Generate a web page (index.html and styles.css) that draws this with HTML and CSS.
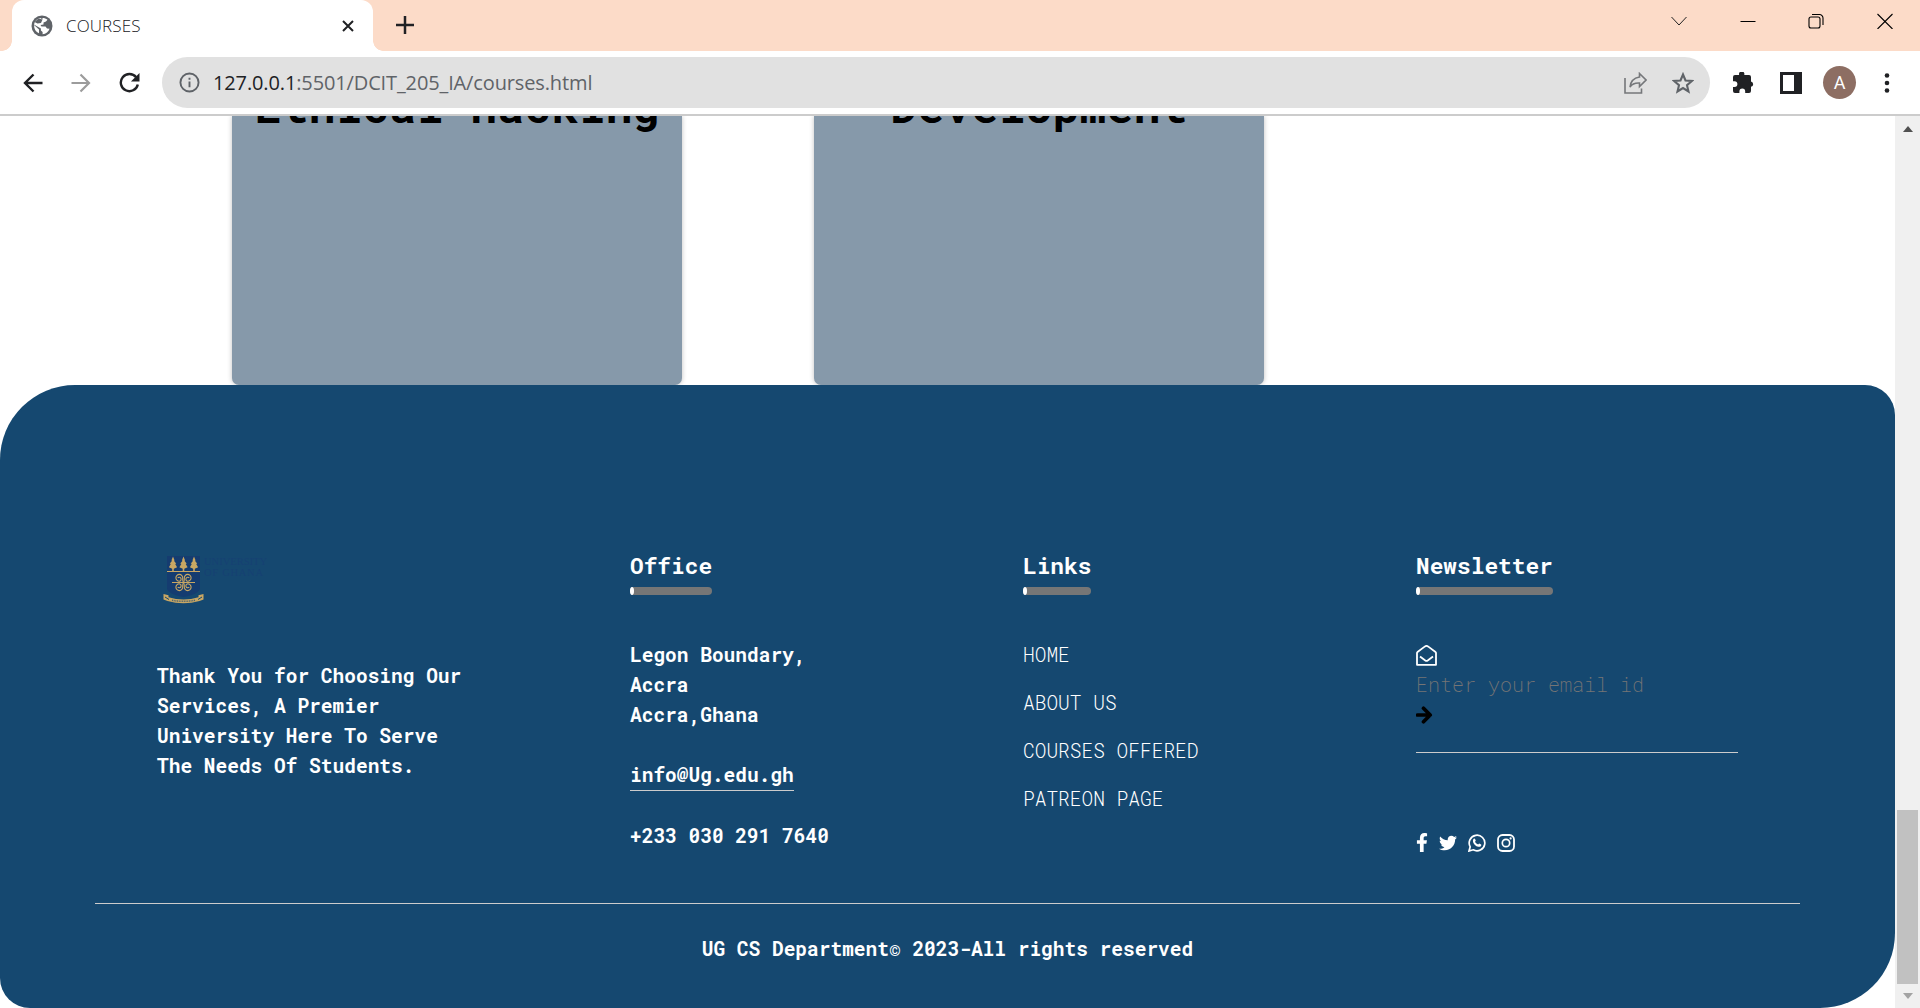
FILE: index.html
```html
<!DOCTYPE html>
<html lang="en">
<head>
<meta charset="utf-8">
<title>COURSES</title>
<link rel="stylesheet" href="styles.css">
</head>
<body>
<header class="tabstrip">
  <div class="tab">
    <svg class="globe" viewBox="0 0 22 22"><circle cx="11" cy="11" r="10.500" fill="#5f6368"/><path d="M11.500 3c2 0 3.600.6 5 1.700l-1.500 1.800-2.500 1v2l-3 .5 1 1.500h4l1.500 2 2.600.3c-1 3-3.600 5.300-7 5.400v-2.200l-1.700-1.500v-2L5.500 11 3 9.500c.7-3.600 3.200-6 6.500-6.500l2 1.500z" fill="#fff"/><path d="M3 10l5 4.500v3.700C4.800 17 3 14 3 10z" fill="#fff"/><path d="M3.500 7l3 1.500 3.500-.5 1.500-3.500-4-1z" fill="#5f6368"/></svg>
    <span class="tab-title">COURSES</span>
    <svg class="tab-close" viewBox="0 0 12 12"><path d="M1 1l10 10M11 1L1 11" stroke="#202124" stroke-width="2"/></svg>
  </div>
  <svg class="newtab" viewBox="0 0 18 18"><path d="M9 0v18M0 9h18" stroke="#202124" stroke-width="2.500"/></svg>
  <div class="window-buttons">
    <svg viewBox="0 0 16 16"><path d="M.5 4L8 12l7.500-8" fill="none" stroke="#222"/></svg>
    <svg viewBox="0 0 16 16"><path d="M.5 8.500h15" stroke="#000"/></svg>
    <svg viewBox="0 0 16 16"><rect x="1" y="4" width="11" height="11" rx="2" fill="none" stroke="#000" stroke-width="1.100"/><path d="M4 1.500h7.500a3.500 3.500 0 0 1 3.500 3.500v7" fill="none" stroke="#000" stroke-width="1.100"/></svg>
    <svg viewBox="0 0 16 16"><path d="M.5 1l15 15M15.500 1l-15 15" stroke="#000" stroke-width="1.100"/></svg>
  </div>
</header>
<nav class="toolbar">
  <svg class="nav-icon" viewBox="0 0 20 20"><path d="M19.500 10H2M10.500 1.500L2 10l8.500 8.500" fill="none" stroke="#202124" stroke-width="2.400"/></svg>
  <svg class="nav-icon" viewBox="0 0 20 20"><path d="M.5 10H18M9.500 1.500L18 10l-8.500 8.500" fill="none" stroke="#9c9c9c" stroke-width="2.200"/></svg>
  <svg class="nav-icon reload" viewBox="0 0 22 22"><path d="M18 5.500A9 9 0 1 0 19.700 13" fill="none" stroke="#202124" stroke-width="2.500"/><path d="M21.500 1v9h-9z" fill="#202124"/></svg>
  <div class="omnibox">
    <svg class="info" viewBox="0 0 22 22"><circle cx="11" cy="11" r="9.500" fill="none" stroke="#5f6368" stroke-width="2"/><path d="M11 10v6M11 6v2" stroke="#5f6368" stroke-width="2"/></svg>
    <span class="url"><b>127.0.0.1</b>:5501/DCIT_205_IA/courses.html</span>
    <svg class="share" viewBox="0 0 23 22"><path d="M1 6v15h16.500v-4.500" fill="none" stroke="#75777a" stroke-width="1.600"/><path d="M15.500 1.500l6.500 6.500-6.500 6.500V11c-4.500-.3-7.500 1-9.500 4 .5-5 3.500-9 9.500-10z" fill="none" stroke="#75777a" stroke-width="1.600"/></svg>
    <svg class="star" viewBox="0 0 22 22"><path d="M11 2.500l2.500 6 6.400.5-4.900 4.200 1.500 6.300-5.500-3.400-5.500 3.400L7 13.200 2.100 9l6.400-.5z" fill="none" stroke="#5f6368" stroke-width="2.100"/></svg>
  </div>
  <svg class="puzzle" viewBox="0 0 21 21"><path d="M2 3h4.200a2.700 2.700 0 1 1 5 0H16a2 2 0 0 1 2 2v4.500a2.700 2.700 0 0 1 0 5.300V19a2 2 0 0 1-2 2h-3.800v-1.500a2.900 2.900 0 0 0-5.800 0V21H2a2 2 0 0 1-2-2v-4h1.500a2.900 2.900 0 0 0 0-5.800H0V5a2 2 0 0 1 2-2z" fill="#202124"/></svg>
  <svg class="panel" viewBox="0 0 22 22"><path d="M1.500 1.500h19v19h-19z" fill="none" stroke="#202124" stroke-width="3"/><path d="M14 1h7v20h-7z" fill="#202124"/></svg>
  <span class="avatar">A</span>
  <svg class="menu" viewBox="0 0 6 20"><g fill="#202124"><circle cx="3" cy="2.500" r="2.300"/><circle cx="3" cy="10" r="2.300"/><circle cx="3" cy="17.500" r="2.300"/></g></svg>
</nav>
<div class="viewport">
  <main class="page">
    <section class="cards">
      <article class="card"><h2>Ethical Hacking</h2></article>
      <article class="card"><h2>Development</h2></article>
    </section>
    <footer class="footer">
      <div class="row">
        <div class="col about">
          <svg class="logo" viewBox="0 0 110 50">
            <path d="M4 1h33v32q0 6-16.500 9Q4 39 4 33z" fill="#153c70"/>
            <g fill="#c9a763"><path id="tree" d="M10 1.500l1.600 4-.7.300 2.300 2.700-1 .4 1.900 3.300-3.300 1.600V16H9.200v-2.200L5.900 12.200l1.900-3.300-1-.4 2.300-2.700-.7-.3z"/><use href="#tree" x="10.500"/><use href="#tree" x="21"/></g>
            <path d="M4 16.500h33M9 27.500h23" stroke="#c9a763"/>
            <g fill="none" stroke="#c9a763" stroke-width="1.100"><path id="curl" d="M20.500 27.500C19.500 26 19.700 24.500 19.700 23A3.400 3.400 0 1 0 16.300 26.200 2 2 0 1 0 14.700 22.800"/><use href="#curl" transform="matrix(-1 0 0 1 41 0)"/><use href="#curl" transform="matrix(1 0 0 -1 0 55)"/><use href="#curl" transform="matrix(-1 0 0 -1 41 55)"/></g>
            <path d="M.5 39l5 1.200v2q15 4.500 30 0v-2l5-1.200v5.500l-4 1.500q-16 4.500-32 0l-4-1.500z" fill="#c9a763"/><path d="M2 42l4 2.500M39 42l-4 2.500" stroke="#154870"/><path d="M9 45.200q11.500 2.300 23 0" fill="none" stroke="#4d6570" stroke-width="1.500" stroke-dasharray="1 .7"/>
            <text class="logo-text" x="41" y="10" textLength="63">UNIVERSITY</text><text class="logo-text" x="41" y="21" textLength="59">OF GHANA</text>
          </svg>
          <p>Thank You for Choosing Our Services, A Premier University Here To Serve The Needs Of Students.</p>
        </div>
        <div class="col">
          <h3>Office <span class="underline"><i></i></span></h3>
          <p>Legon Boundary,<br>Accra</p>
          <p>Accra,Ghana</p>
          <p class="email"><span>info@Ug.edu.gh</span></p>
          <p class="phone">+233 030 291 7640</p>
        </div>
        <div class="col">
          <h3>Links <span class="underline"><i></i></span></h3>
          <ul><li>HOME</li><li>ABOUT US</li><li>COURSES OFFERED</li><li>PATREON PAGE</li></ul>
        </div>
        <div class="col">
          <h3>Newsletter <span class="underline"><i></i></span></h3>
          <div class="form">
            <svg class="mail" viewBox="0 0 21 21"><path d="M1 19.800V8q0-.7.500-1L9 1.400q1.500-1 3 0L19.500 7q.5.300.5 1v11.800z" fill="none" stroke="#fff" stroke-width="1.800" stroke-linejoin="round"/><path d="M4 11.500l5.300 4q1.200.8 2.400 0l5.300-4" fill="none" stroke="#fff" stroke-width="1.800"/></svg>
            <span class="placeholder">Enter your email id</span>
            <svg class="arrow" viewBox="0 0 17 18"><path d="M1.500 9H14M7.500 2.300L14.200 9l-6.700 6.700" fill="none" stroke="#000" stroke-width="3.700" stroke-linecap="round" stroke-linejoin="round"/></svg>
          </div>
          <div class="social">
            <svg class="fb" viewBox="0 0 320 512"><path d="M279 288l14-93h-89v-60c0-25 12-50 52-50h41V7S260 0 225 0c-73 0-121 44-121 125v70H23v93h81v224h100V288z"/></svg>
            <svg viewBox="0 0 512 512"><path d="M459 152c.3 4.500.3 9 .3 13.600 0 139-106 299-299 299-59 0-115-17-161-47 8 1 16 1.300 25 1.300 49 0 94-17 130-45-46-1-85-31-98-73 6.500 1 13 1.600 20 1.600 9.400 0 19-1.300 28-3.600-48-10-84-52-84-103v-1.300c14 8 30 13 47 13.600-28-19-47-51-47-87 0-19 5-37 14-53 52 64 129 105 216 110-1.600-8-2.600-16-2.600-24 0-58 47-105 105-105 30 0 57 13 77 33 24-5 46-13 67-25-8 24-24 45-46 58 21-2 42-8 60-16-14 21-32 39-52 54z"/></svg>
            <svg viewBox="0 0 18 18"><path d="M1 17l1.200-4.200A7.800 7.800 0 1 1 5.200 15.800z" fill="none" stroke="#fff" stroke-width="1.700"/><path d="M5.300 5.200c.7-.9 1.500-.9 1.900 0l.6 1.500-.8 1.100c.8 1.500 1.900 2.300 3.200 2.800l.9-1.100 2 .9c.4.300.2 1.300-.3 1.800-1.200 1.100-3.200.8-5.300-.8C5.200 9.500 4.300 6.900 5.300 5.200z"/></svg>
            <svg viewBox="0 0 18 18"><rect x="1" y="1" width="16" height="16" rx="4.500" fill="none" stroke="#fff" stroke-width="1.800"/><circle cx="9" cy="9" r="3.700" fill="none" stroke="#fff" stroke-width="1.700"/><circle cx="13.600" cy="4.400" r="1.100"/></svg>
          </div>
        </div>
      </div>
      <p class="copyright">UG CS Department© 2023-All rights reserved</p>
    </footer>
  </main>
  <aside class="scrollbar"><i class="up"></i><i class="thumb"></i><i class="down"></i></aside>
</div>
</body>
</html>
```
FILE: styles.css
```css
* { box-sizing: border-box; margin: 0; padding: 0; }
body { width: 1920px; height: 1008px; overflow: hidden; background: #fff; font-family: "Open Sans", sans-serif; display: flex; flex-direction: column; }
svg { display: block; flex: none; }
.tabstrip { height: 51px; background: #fcdbc8; display: flex; padding-left: 10px; flex: none; }
.tab { position: relative; width: 361px; margin-left: 2px; background: #fff; border-radius: 12px 12px 0 0; display: flex; align-items: center; padding: 0 16px 0 19px; }
.tab::before, .tab::after { content: ""; position: absolute; bottom: 0; width: 10px; height: 10px; }
.tab::before { left: -10px; background: radial-gradient(circle at 0 0, #fcdbc8 9.500px, #fff 10px); }
.tab::after { right: -10px; background: radial-gradient(circle at 100% 0, #fcdbc8 9.500px, #fff 10px); }
.globe { width: 22px; height: 22px; }
.tab-title { margin-left: 13px; font-size: 17px; font-weight: 300; color: #202124; letter-spacing: .1px; flex: 1; }
.tab-close { width: 12px; height: 12px; margin-right: 3px; }
.newtab { width: 18px; height: 18px; margin: 16px 0 0 23px; }
.window-buttons { margin: 13px 27px 0 auto; display: flex; gap: 52.600px; }
.window-buttons svg { width: 16px; height: 16px; }
.toolbar { height: 65px; border-bottom: 2px solid #ccc; display: flex; align-items: center; padding: 0 30px 0 23px; flex: none; }
.nav-icon { width: 20px; height: 20px; margin-right: 28px; }
.nav-icon.reload { width: 21px; height: 21px; margin-right: 22px; }
.omnibox { flex: 1; height: 51px; border-radius: 26px; background: #e1e1e1; display: flex; align-items: center; padding: 0 16px 0 17px; }
.info { width: 21px; height: 21px; }
.url { flex: 1; margin-left: 13px; font-size: 20px; letter-spacing: -.13px; color: #5f6368; white-space: nowrap; }
.url b { font-weight: 400; color: #202124; }
.share { width: 23px; height: 22px; margin-right: 25px; }
.star { width: 22px; height: 22px; }
.puzzle { width: 21px; height: 21px; margin-left: 23px; }
.panel { width: 22px; height: 22px; margin-left: 26px; }
.avatar { width: 33px; height: 33px; border-radius: 50%; background: #8d6e63; color: #fff; font: 18px/34px Roboto, sans-serif; text-align: center; margin-left: 21px; }
.menu { width: 6px; height: 20px; margin-left: 28px; }
.viewport { height: 892px; display: flex; overflow: hidden; }
.page { width: 1895px; font-family: "Roboto Mono", "DejaVu Sans Mono", monospace; font-size: 19.500px; }
.cards { height: 269px; padding-left: 232px; display: flex; gap: 132px; }
.card { width: 450px; height: 269px; background: #8699aa; border-radius: 0 0 7px 7px; box-shadow: 0 0 5px rgba(0,0,0,.25); text-align: center; }
.card h2 { font-size: 45px; line-height: 60px; margin-top: -40px; }
.footer { height: 623px; background: #154870; border-radius: 75px 30px 75px 30px; color: #fff; padding: 0 95px; position: relative; }
.row { height: 519px; border-bottom: 1px solid #ccc; padding: 164px 0 0 62px; display: flex; }
.col { width: 393px; flex: none; line-height: 30px; font-weight: 700; }
.col:last-child { width: 322px; }
.col.about { width: 473px; }
.about p { width: 322px; margin-top: 56px; }
.logo { width: 110px; height: 50px; margin: 6px 0 0 6px; }
.logo-text { font: 400 10.500px "Liberation Serif", serif; fill: #164173; }
h3 { display: table; font-size: 22.800px; line-height: 30px; margin: 1px 0 46px; }
.underline { display: block; height: 8px; margin-top: 7px; border-radius: 4px; background: #767676; }
.underline i { display: block; width: 4px; height: 8px; border-radius: 50%; background: #fff; }
.col h3 + p, .col ul { margin-top: -1px; }
.email { margin: 30px 0; }
.email span { display: inline-block; border-bottom: 1px solid #ccc; }
ul { list-style: none; font-weight: 300; }
li { margin-bottom: 18px; }
.form { width: 322px; height: 108px; border-bottom: 1px solid #ccc; margin-top: 50px; }
.mail { width: 21px; height: 21px; }
.placeholder { display: block; margin-top: 3px; font-weight: 200; font-size: 20px; color: #757575; }
.arrow { width: 17px; height: 18px; margin-top: 7px; }
.social { display: flex; align-items: center; gap: 11px; margin-top: 80px; fill: #fff; }
.social svg { width: 18px; height: 18px; }
.social .fb { width: 12px; height: 19px; }
.copyright { text-align: center; line-height: 30px; margin-top: 30px; font-weight: 700; }
.scrollbar { width: 25px; background: #f0f0f0; display: flex; flex-direction: column; align-items: center; }
.scrollbar i { display: block; flex: none; }
.up { margin-top: 10px; border: 5.500px solid transparent; border-top: 0; border-bottom: 6px solid #505050; }
.thumb { width: 21px; height: 174px; margin-top: 678px; background: #c1c1c1; }
.down { margin-top: 9px; border: 5.500px solid transparent; border-bottom: 0; border-top: 6px solid #a3a3a3; }
```
